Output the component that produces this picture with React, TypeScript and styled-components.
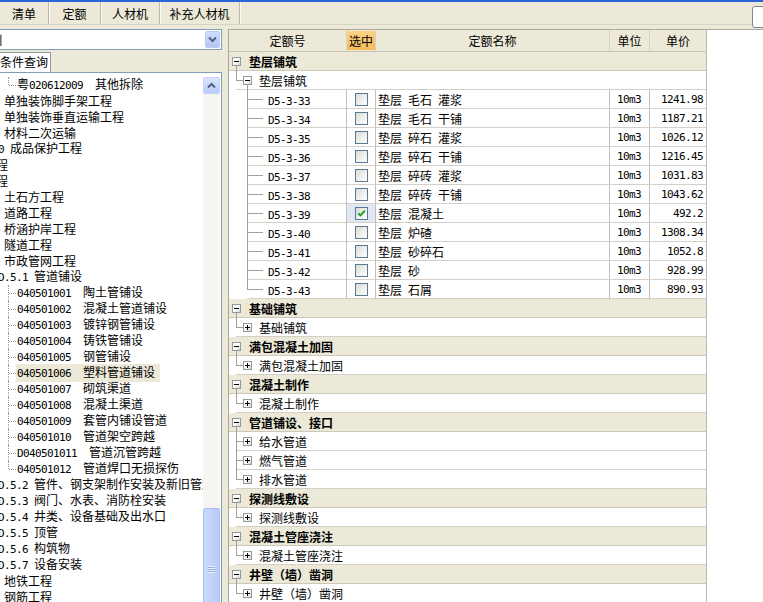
import React from 'react'
import styled, { createGlobalStyle, css } from 'styled-components'

const GlobalStyle = createGlobalStyle`
  html, body { margin: 0; padding: 0; }
  body {
    background: #ece9d8;
    font-family: "SimSun", "Noto Sans CJK SC", sans-serif;
    font-size: 12px;
    color: #000;
  }
  * { box-sizing: border-box; }
`

const Mono = styled.span`
  font-family: "DejaVu Sans Mono", "Liberation Mono", monospace;
  font-size: 11px;
  letter-spacing: -0.62px;
  font-weight: normal;
`

// latin runs get the half-width mono face, like SimSun's 6px digits
function Txt({ children }: { children: string }) {
  const parts = children.match(/[\x20-\x7e]+|[^\x20-\x7e]+/g) ?? []
  return (
    <>
      {parts.map((p, i) =>
        /^[\x20-\x7e]/.test(p) ? <Mono key={i}>{p}</Mono> : <React.Fragment key={i}>{p}</React.Fragment>
      )}
    </>
  )
}

const Screen = styled.div`
  position: relative;
  width: 763px;
  height: 602px;
  overflow: hidden;
  display: flex;
  flex-direction: column;
  background: #ece9d8;
`

const TitleEdge = styled.div`
  flex: none;
  height: 2px;
  background: #2b63d9;
`

const TabBar = styled.div`
  flex: none;
  height: 23px;
  display: flex;
  border-bottom: 1px solid #d8d4c4;
`

const TopTab = styled.div<{ $w: number }>`
  width: ${p => p.$w}px;
  display: flex;
  align-items: center;
  justify-content: center;
  border-right: 1px solid #bdb9a6;
  box-shadow: 1px 0 0 #fbfaf6;
`

const CornerButton = styled.div`
  position: absolute;
  left: 752px;
  top: 6px;
  width: 26px;
  height: 22px;
  border: 1px solid #7c8590;
  border-radius: 3px;
  background: #fff;
`

const Body = styled.div`
  flex: 1;
  min-height: 0;
  display: flex;
  padding-top: 4px;
`

const LeftPanel = styled.div`
  flex: none;
  width: 222px;
  display: flex;
  flex-direction: column;
`

const Combo = styled.div`
  flex: none;
  height: 21px;
  display: flex;
  align-items: center;
  overflow: hidden;
  background: #fff;
  border: 1px solid #7f9db9;
  border-left: none;
`

const ComboText = styled.span`
  flex: 1;
  margin-left: -9px;
  white-space: nowrap;
`

const DropButton = styled.span`
  flex: none;
  width: 15px;
  height: 17px;
  margin-right: 1px;
  display: flex;
  align-items: center;
  justify-content: center;
  border: 1px solid #b9ccf6;
  border-radius: 2px;
  background: linear-gradient(#d2defc, #b3c6f4);
`

const QueryTab = styled.div`
  flex: none;
  margin-top: 2px;
  width: 51px;
  height: 20px;
  line-height: 18px;
  white-space: nowrap;
  overflow: hidden;
  background: #fcfcfe;
  border: 1px solid #919b9c;
  border-left: none;
  border-bottom: none;
`

const TreeBox = styled.div`
  flex: 1;
  min-height: 0;
  display: flex;
  overflow: hidden;
  background: #fff;
  border-top: 1px solid #7f9db9;
  border-right: 1px solid #7f9db9;
`

const TreeList = styled.div`
  flex: 1;
  min-width: 0;
  overflow: hidden;
  padding-top: 4px;
`

const TreeRow = styled.div`
  height: 16px;
  line-height: 16px;
  display: flex;
  align-items: center;
  white-space: pre;
`

const TreeText = styled.span<{ $x: number }>`
  margin-left: ${p => p.$x}px;
`

const TreeDots = styled.span<{ $last?: boolean }>`
  position: relative;
  flex: none;
  align-self: stretch;
  width: 8px;
  margin-left: 8px;
  &::before {
    content: '';
    position: absolute;
    left: 0;
    top: 0;
    height: ${p => (p.$last ? '8px' : '16px')};
    border-left: 1px dotted #9a9a9a;
  }
  &::after {
    content: '';
    position: absolute;
    left: 1px;
    top: 8px;
    width: 7px;
    border-top: 1px dotted #9a9a9a;
  }
`

const LeafLabel = styled.span<{ $sel?: boolean }>`
  padding: 0 5px 0 1px;
  background: ${p => (p.$sel ? '#ece9d8' : 'transparent')};
`

const LeafCode = styled.span<{ $w: number }>`
  display: inline-block;
  width: ${p => p.$w}px;
`

const ScrollBar = styled.div`
  flex: none;
  width: 17px;
  margin: 4px 1px 0 0;
  display: flex;
  flex-direction: column;
  background: #f6f5f0;
`

const ScrollButton = styled.div`
  flex: none;
  height: 17px;
  display: flex;
  align-items: center;
  justify-content: center;
  border: 1px solid #c3d3fd;
  border-radius: 2px;
  background: linear-gradient(#dbe5fd, #b9cbf7);
`

const Track = styled.div`
  flex: 1;
  display: flex;
  flex-direction: column;
  justify-content: flex-end;
`

const Thumb = styled.div`
  flex: none;
  height: 122px;
  margin-bottom: -28px;
  display: flex;
  align-items: center;
  justify-content: center;
  border: 1px solid #a9bff1;
  border-radius: 2px;
  background: linear-gradient(90deg, #cbd9fc, #b8cbf7);
`

const Grip = styled.span`
  width: 7px;
  height: 7px;
  background: repeating-linear-gradient(#eef3fe 0 1px, #8fa9e4 1px 2px);
`

const Splitter = styled.div`
  flex: none;
  width: 6px;
`

const RightPanel = styled.div`
  flex: 1;
  min-width: 0;
  overflow: hidden;
  background: #fff;
  border-top: 1px solid #aca899;
  border-left: 1px solid #aca899;
`

const Grid = styled.div`
  width: 478px;
`

const COLS = [118, 29, 234, 40, 57]

const HeaderRow = styled.div`
  display: flex;
  height: 22px;
  background: #ece9d8;
  border-bottom: 1px solid #c9c5b5;
`

const HeadCell = styled.div<{ $w: number; $hot?: boolean }>`
  width: ${p => p.$w}px;
  display: flex;
  align-items: center;
  justify-content: center;
  border-right: 1px solid #d6d2c2;
  ${p =>
    p.$hot &&
    css`
      background: linear-gradient(#fbd48c, #f5b955);
      box-shadow: inset 0 1px 0 #ece9d8, inset 0 -1px 0 #ece9d8;
    `}
  &:last-child {
    border-right-color: #b8b8b8;
  }
`

const GroupRow = styled.div`
  height: 19px;
  display: flex;
  align-items: center;
  padding-left: 3px;
  background: #ece9d8;
  border-bottom: 1px solid #cdc9b9;
  border-right: 1px solid #b8b8b8;
  font-weight: bold;
`

const GroupLabel = styled.span`
  margin-left: 8px;
`

const Toggle = styled.span<{ $open?: boolean; $stem?: boolean }>`
  position: relative;
  flex: none;
  width: 9px;
  height: 9px;
  border: 1px solid #919b9c;
  background: linear-gradient(135deg, #fff 45%, #d6d4ca);
  &::before {
    content: '';
    position: absolute;
    left: 1px;
    top: 3px;
    width: 5px;
    height: 1px;
    background: #000;
  }
  ${p =>
    !p.$open &&
    css`
      &::after {
        content: '';
        position: absolute;
        left: 3px;
        top: 1px;
        width: 1px;
        height: 5px;
        background: #000;
      }
    `}
  ${p =>
    p.$open &&
    p.$stem &&
    css`
      &::after {
        content: '';
        position: absolute;
        left: 3px;
        top: 8px;
        width: 1px;
        height: 7px;
        background: #a0a0a0;
      }
    `}
`

const SubRow = styled.div`
  height: 19px;
  display: flex;
  padding-left: 7px;
  border-right: 1px solid #b8b8b8;
`

const SubLine = styled.div`
  flex: 1;
  display: flex;
  align-items: center;
  border-bottom: 1px solid #d4d0c8;
`

const SubLabel = styled.span`
  margin-left: 7px;
`

const Elbow = styled.span<{ $w: number; $last?: boolean }>`
  position: relative;
  flex: none;
  align-self: stretch;
  width: ${p => p.$w}px;
  &::before {
    content: '';
    position: absolute;
    left: 0;
    top: 0;
    width: 1px;
    height: ${p => (p.$last ? '9px' : '19px')};
    background: #a0a0a0;
  }
  &::after {
    content: '';
    position: absolute;
    left: 0;
    top: 9px;
    width: 100%;
    height: 1px;
    background: #a0a0a0;
  }
`

const DataRow = styled.div`
  height: 19px;
  display: flex;
`

const CodeCell = styled.div`
  width: ${COLS[0]}px;
  display: flex;
  padding-left: 18px;
  border-right: 1px solid #c0c0c0;
`

const CodeInner = styled.div`
  flex: 1;
  display: flex;
  align-items: center;
  border-bottom: 1px solid #d4d0c8;
`

const CodeText = styled.span`
  margin-left: 5px;
  white-space: pre;
`

const Cell = styled.div<{ $w: number }>`
  width: ${p => p.$w}px;
  display: flex;
  align-items: center;
  white-space: pre;
  border-right: 1px solid #c0c0c0;
  border-bottom: 1px solid #d4d0c8;
`

const CheckCell = styled(Cell)<{ $on?: boolean }>`
  justify-content: center;
  background: ${p => (p.$on ? '#e1e8f4' : '#fff')};
`

const NameCell = styled(Cell)`
  padding-left: 2px;
`

const UnitCell = styled(Cell)`
  padding-left: 7px;
`

const PriceCell = styled(Cell)`
  justify-content: flex-end;
  padding-right: 3px;
  border-right-color: #b8b8b8;
`

const CheckBox = styled.span`
  width: 13px;
  height: 13px;
  display: flex;
  align-items: center;
  justify-content: center;
  border: 1px solid #5b7897;
  background: linear-gradient(135deg, #dcdcd5, #fff);
`

type TreeItem = { text: string; x?: number; leaf?: boolean; last?: boolean; sel?: boolean }

const tree: TreeItem[] = [
  { text: '粤020612009  其他拆除', leaf: true, last: true },
  { text: '单独装饰脚手架工程', x: 4 },
  { text: '单独装饰垂直运输工程', x: 4 },
  { text: '材料二次运输', x: 4 },
  { text: '0 成品保护工程', x: -2 },
  { text: '程', x: -4 },
  { text: '程', x: -4 },
  { text: '土石方工程', x: 4 },
  { text: '道路工程', x: 4 },
  { text: '桥涵护岸工程', x: 4 },
  { text: '隧道工程', x: 4 },
  { text: '市政管网工程', x: 4 },
  { text: 'D.5.1 管道铺设', x: -2 },
  { text: '040501001  陶土管铺设', leaf: true },
  { text: '040501002  混凝土管道铺设', leaf: true },
  { text: '040501003  镀锌钢管铺设', leaf: true },
  { text: '040501004  铸铁管铺设', leaf: true },
  { text: '040501005  钢管铺设', leaf: true },
  { text: '040501006  塑料管道铺设', leaf: true, sel: true },
  { text: '040501007  砌筑渠道', leaf: true },
  { text: '040501008  混凝土渠道', leaf: true },
  { text: '040501009  套管内铺设管道', leaf: true },
  { text: '040501010  管道架空跨越', leaf: true },
  { text: 'D040501011  管道沉管跨越', leaf: true },
  { text: '040501012  管道焊口无损探伤', leaf: true, last: true },
  { text: 'D.5.2 管件、钢支架制作安装及新旧管连接', x: -2 },
  { text: 'D.5.3 阀门、水表、消防栓安装', x: -2 },
  { text: 'D.5.4 井类、设备基础及出水口', x: -2 },
  { text: 'D.5.5 顶管', x: -2 },
  { text: 'D.5.6 构筑物', x: -2 },
  { text: 'D.5.7 设备安装', x: -2 },
  { text: '地铁工程', x: 4 },
  { text: '钢筋工程', x: 4 },
]

type Quota = { code: string; name: string; price: string; on?: boolean }

const quotas: Quota[] = [
  { code: 'D5-3-33', name: '垫层 毛石 灌浆', price: '1241.98' },
  { code: 'D5-3-34', name: '垫层 毛石 干铺', price: '1187.21' },
  { code: 'D5-3-35', name: '垫层 碎石 灌浆', price: '1026.12' },
  { code: 'D5-3-36', name: '垫层 碎石 干铺', price: '1216.45' },
  { code: 'D5-3-37', name: '垫层 碎砖 灌浆', price: '1031.83' },
  { code: 'D5-3-38', name: '垫层 碎砖 干铺', price: '1043.62' },
  { code: 'D5-3-39', name: '垫层 混凝土', price: '492.2', on: true },
  { code: 'D5-3-40', name: '垫层 炉碴', price: '1308.34' },
  { code: 'D5-3-41', name: '垫层 砂碎石', price: '1052.8' },
  { code: 'D5-3-42', name: '垫层 砂', price: '928.99' },
  { code: 'D5-3-43', name: '垫层 石屑', price: '890.93' },
]

type Group = { title: string; subs: { title: string; open?: boolean }[] }

const groups: Group[] = [
  { title: '垫层铺筑', subs: [{ title: '垫层铺筑', open: true }] },
  { title: '基础铺筑', subs: [{ title: '基础铺筑' }] },
  { title: '满包混凝土加固', subs: [{ title: '满包混凝土加固' }] },
  { title: '混凝土制作', subs: [{ title: '混凝土制作' }] },
  { title: '管道铺设、接口', subs: [{ title: '给水管道' }, { title: '燃气管道' }, { title: '排水管道' }] },
  { title: '探测线敷设', subs: [{ title: '探测线敷设' }] },
  { title: '混凝土管座浇注', subs: [{ title: '混凝土管座浇注' }] },
  { title: '井壁（墙）凿洞', subs: [{ title: '井壁（墙）凿洞' }] },
]

const codeWidth = (code: string) =>
  [...code].reduce((w, ch) => w + (ch.charCodeAt(0) > 0x7e ? 12 : 6), 0) + 12

function TreeLine({ item }: { item: TreeItem }) {
  if (!item.leaf) {
    return (
      <TreeRow>
        <TreeText $x={item.x ?? 0}>
          <Txt>{item.text}</Txt>
        </TreeText>
      </TreeRow>
    )
  }
  const [code, name] = item.text.split('  ')
  return (
    <TreeRow>
      <TreeDots $last={item.last} />
      <LeafLabel $sel={item.sel}>
        <LeafCode $w={codeWidth(code)}>
          <Txt>{code}</Txt>
        </LeafCode>
        {name}
      </LeafLabel>
    </TreeRow>
  )
}

function QuotaRow({ q, last }: { q: Quota; last: boolean }) {
  return (
    <DataRow>
      <CodeCell>
        <CodeInner>
          <Elbow $w={16} $last={last} />
          <CodeText>
            <Mono>{q.code}</Mono>
          </CodeText>
        </CodeInner>
      </CodeCell>
      <CheckCell $w={COLS[1]} $on={q.on}>
        <CheckBox>
          {q.on && (
            <svg width="9" height="9" viewBox="0 0 9 9">
              <path d="M1.2 4.2 L3.4 6.4 L7.8 1.8" fill="none" stroke="#21a121" strokeWidth="2" />
            </svg>
          )}
        </CheckBox>
      </CheckCell>
      <NameCell $w={COLS[2]}>
        <Txt>{q.name}</Txt>
      </NameCell>
      <UnitCell $w={COLS[3]}>
        <Mono>10m3</Mono>
      </UnitCell>
      <PriceCell $w={COLS[4]}>
        <Mono>{q.price}</Mono>
      </PriceCell>
    </DataRow>
  )
}

export default function App() {
  return (
    <>
      <GlobalStyle />
      <Screen>
        <TitleEdge />
        <TabBar>
          <TopTab $w={49}>清单</TopTab>
          <TopTab $w={52}>定额</TopTab>
          <TopTab $w={59}>人材机</TopTab>
          <TopTab $w={80}>补充人材机</TopTab>
        </TabBar>
        <CornerButton />
        <Body>
          <LeftPanel>
            <Combo>
              <ComboText>引</ComboText>
              <DropButton>
                <svg width="9" height="7" viewBox="0 0 9 7">
                  <path d="M1 1.5 L4.5 5 L8 1.5" fill="none" stroke="#4d6185" strokeWidth="2" />
                </svg>
              </DropButton>
            </Combo>
            <QueryTab>条件查询</QueryTab>
            <TreeBox>
              <TreeList>
                {tree.map((item, i) => (
                  <TreeLine key={i} item={item} />
                ))}
              </TreeList>
              <ScrollBar>
                <ScrollButton>
                  <svg width="9" height="7" viewBox="0 0 9 7">
                    <path d="M1 5.5 L4.5 2 L8 5.5" fill="none" stroke="#4d6185" strokeWidth="2" />
                  </svg>
                </ScrollButton>
                <Track>
                  <Thumb>
                    <Grip />
                  </Thumb>
                </Track>
              </ScrollBar>
            </TreeBox>
          </LeftPanel>
          <Splitter />
          <RightPanel>
            <Grid>
              <HeaderRow>
                <HeadCell $w={COLS[0]}>定额号</HeadCell>
                <HeadCell $w={COLS[1]} $hot>
                  选中
                </HeadCell>
                <HeadCell $w={COLS[2]}>定额名称</HeadCell>
                <HeadCell $w={COLS[3]}>单位</HeadCell>
                <HeadCell $w={COLS[4]}>单价</HeadCell>
              </HeaderRow>
              {groups.map((g, gi) => (
                <React.Fragment key={gi}>
                  <GroupRow>
                    <Toggle $open $stem />
                    <GroupLabel>{g.title}</GroupLabel>
                  </GroupRow>
                  {g.subs.map((s, si) => (
                    <React.Fragment key={si}>
                      <SubRow>
                        <SubLine>
                          <Elbow $w={7} $last={si === g.subs.length - 1} />
                          <Toggle $open={s.open} $stem={s.open} />
                          <SubLabel>{s.title}</SubLabel>
                        </SubLine>
                      </SubRow>
                      {s.open &&
                        quotas.map((q, qi) => (
                          <QuotaRow key={q.code} q={q} last={qi === quotas.length - 1} />
                        ))}
                    </React.Fragment>
                  ))}
                </React.Fragment>
              ))}
            </Grid>
          </RightPanel>
        </Body>
      </Screen>
    </>
  )
}
